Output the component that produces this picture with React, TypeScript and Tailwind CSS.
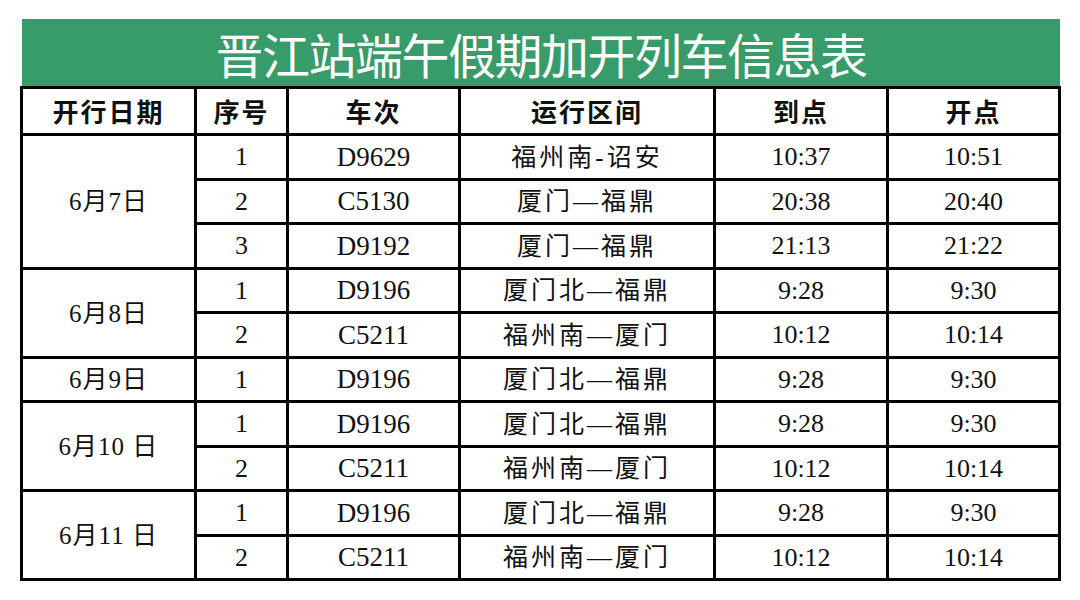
import React from "react";

type Row = { date?: string; span?: number; no: string; train: string; route: string; arr: string; dep: string };

const rows: Row[] = [
  { date: "6月7日", span: 3, no: "1", train: "D9629", route: "福州南-诏安", arr: "10:37", dep: "10:51" },
  { no: "2", train: "C5130", route: "厦门—福鼎", arr: "20:38", dep: "20:40" },
  { no: "3", train: "D9192", route: "厦门—福鼎", arr: "21:13", dep: "21:22" },
  { date: "6月8日", span: 2, no: "1", train: "D9196", route: "厦门北—福鼎", arr: "9:28", dep: "9:30" },
  { no: "2", train: "C5211", route: "福州南—厦门", arr: "10:12", dep: "10:14" },
  { date: "6月9日", span: 1, no: "1", train: "D9196", route: "厦门北—福鼎", arr: "9:28", dep: "9:30" },
  { date: "6月10 日", span: 2, no: "1", train: "D9196", route: "厦门北—福鼎", arr: "9:28", dep: "9:30" },
  { no: "2", train: "C5211", route: "福州南—厦门", arr: "10:12", dep: "10:14" },
  { date: "6月11 日", span: 2, no: "1", train: "D9196", route: "厦门北—福鼎", arr: "9:28", dep: "9:30" },
  { no: "2", train: "C5211", route: "福州南—厦门", arr: "10:12", dep: "10:14" },
];

const serif = "font-['Liberation_Serif','Noto_Sans_CJK_SC',serif]";
const cjk = "font-['Noto_Sans_CJK_SC',sans-serif]";
const cell = "border-[3px] border-black p-0 text-center align-middle text-[#111]";

export default function App() {
  const headers = ["开行日期", "序号", "车次", "运行区间", "到点", "开点"];
  return (
    <div className="w-[1080px] h-[600px] bg-white pt-[19px] pl-[20px]">
      <div className="ml-[2px] w-[1038px] h-[67px] bg-[#379b6a] flex items-center justify-center">
        <span className={`${cjk} text-white text-[48px] leading-none tracking-[-1.5px] mt-[1px]`}>
          晋江站端午假期加开列车信息表
        </span>
      </div>
      <table className="border-collapse table-fixed w-[1038px]">
        <colgroup>
          <col className="w-[174px]" />
          <col className="w-[92px]" />
          <col className="w-[172px]" />
          <col className="w-[255px]" />
          <col className="w-[173px]" />
          <col className="w-[172px]" />
        </colgroup>
        <thead>
          <tr className="h-[47px]">
            {headers.map((h) => (
              <th key={h} className={`${cell} ${cjk} text-[26px] font-semibold tracking-[2px] leading-none`}>
                {h}
              </th>
            ))}
          </tr>
        </thead>
        <tbody>
          {rows.map((r, i) => (
            <tr key={i} className={i % 2 === 0 ? "h-[45px]" : "h-[44px]"}>
              {r.date && (
                <td rowSpan={r.span} className={`${cell} ${serif} text-[25px] tracking-[1px] leading-none`}>
                  {r.date}
                </td>
              )}
              <td className={`${cell} ${serif} text-[26px] leading-none`}>{r.no}</td>
              <td className={`${cell} ${serif} text-[27px] leading-none`}>{r.train}</td>
              <td className={`${cell} ${serif} text-[25px] tracking-[3px] leading-none`}>{r.route}</td>
              <td className={`${cell} ${serif} text-[26px] leading-none`}>{r.arr}</td>
              <td className={`${cell} ${serif} text-[26px] leading-none`}>{r.dep}</td>
            </tr>
          ))}
        </tbody>
      </table>
    </div>
  );
}
